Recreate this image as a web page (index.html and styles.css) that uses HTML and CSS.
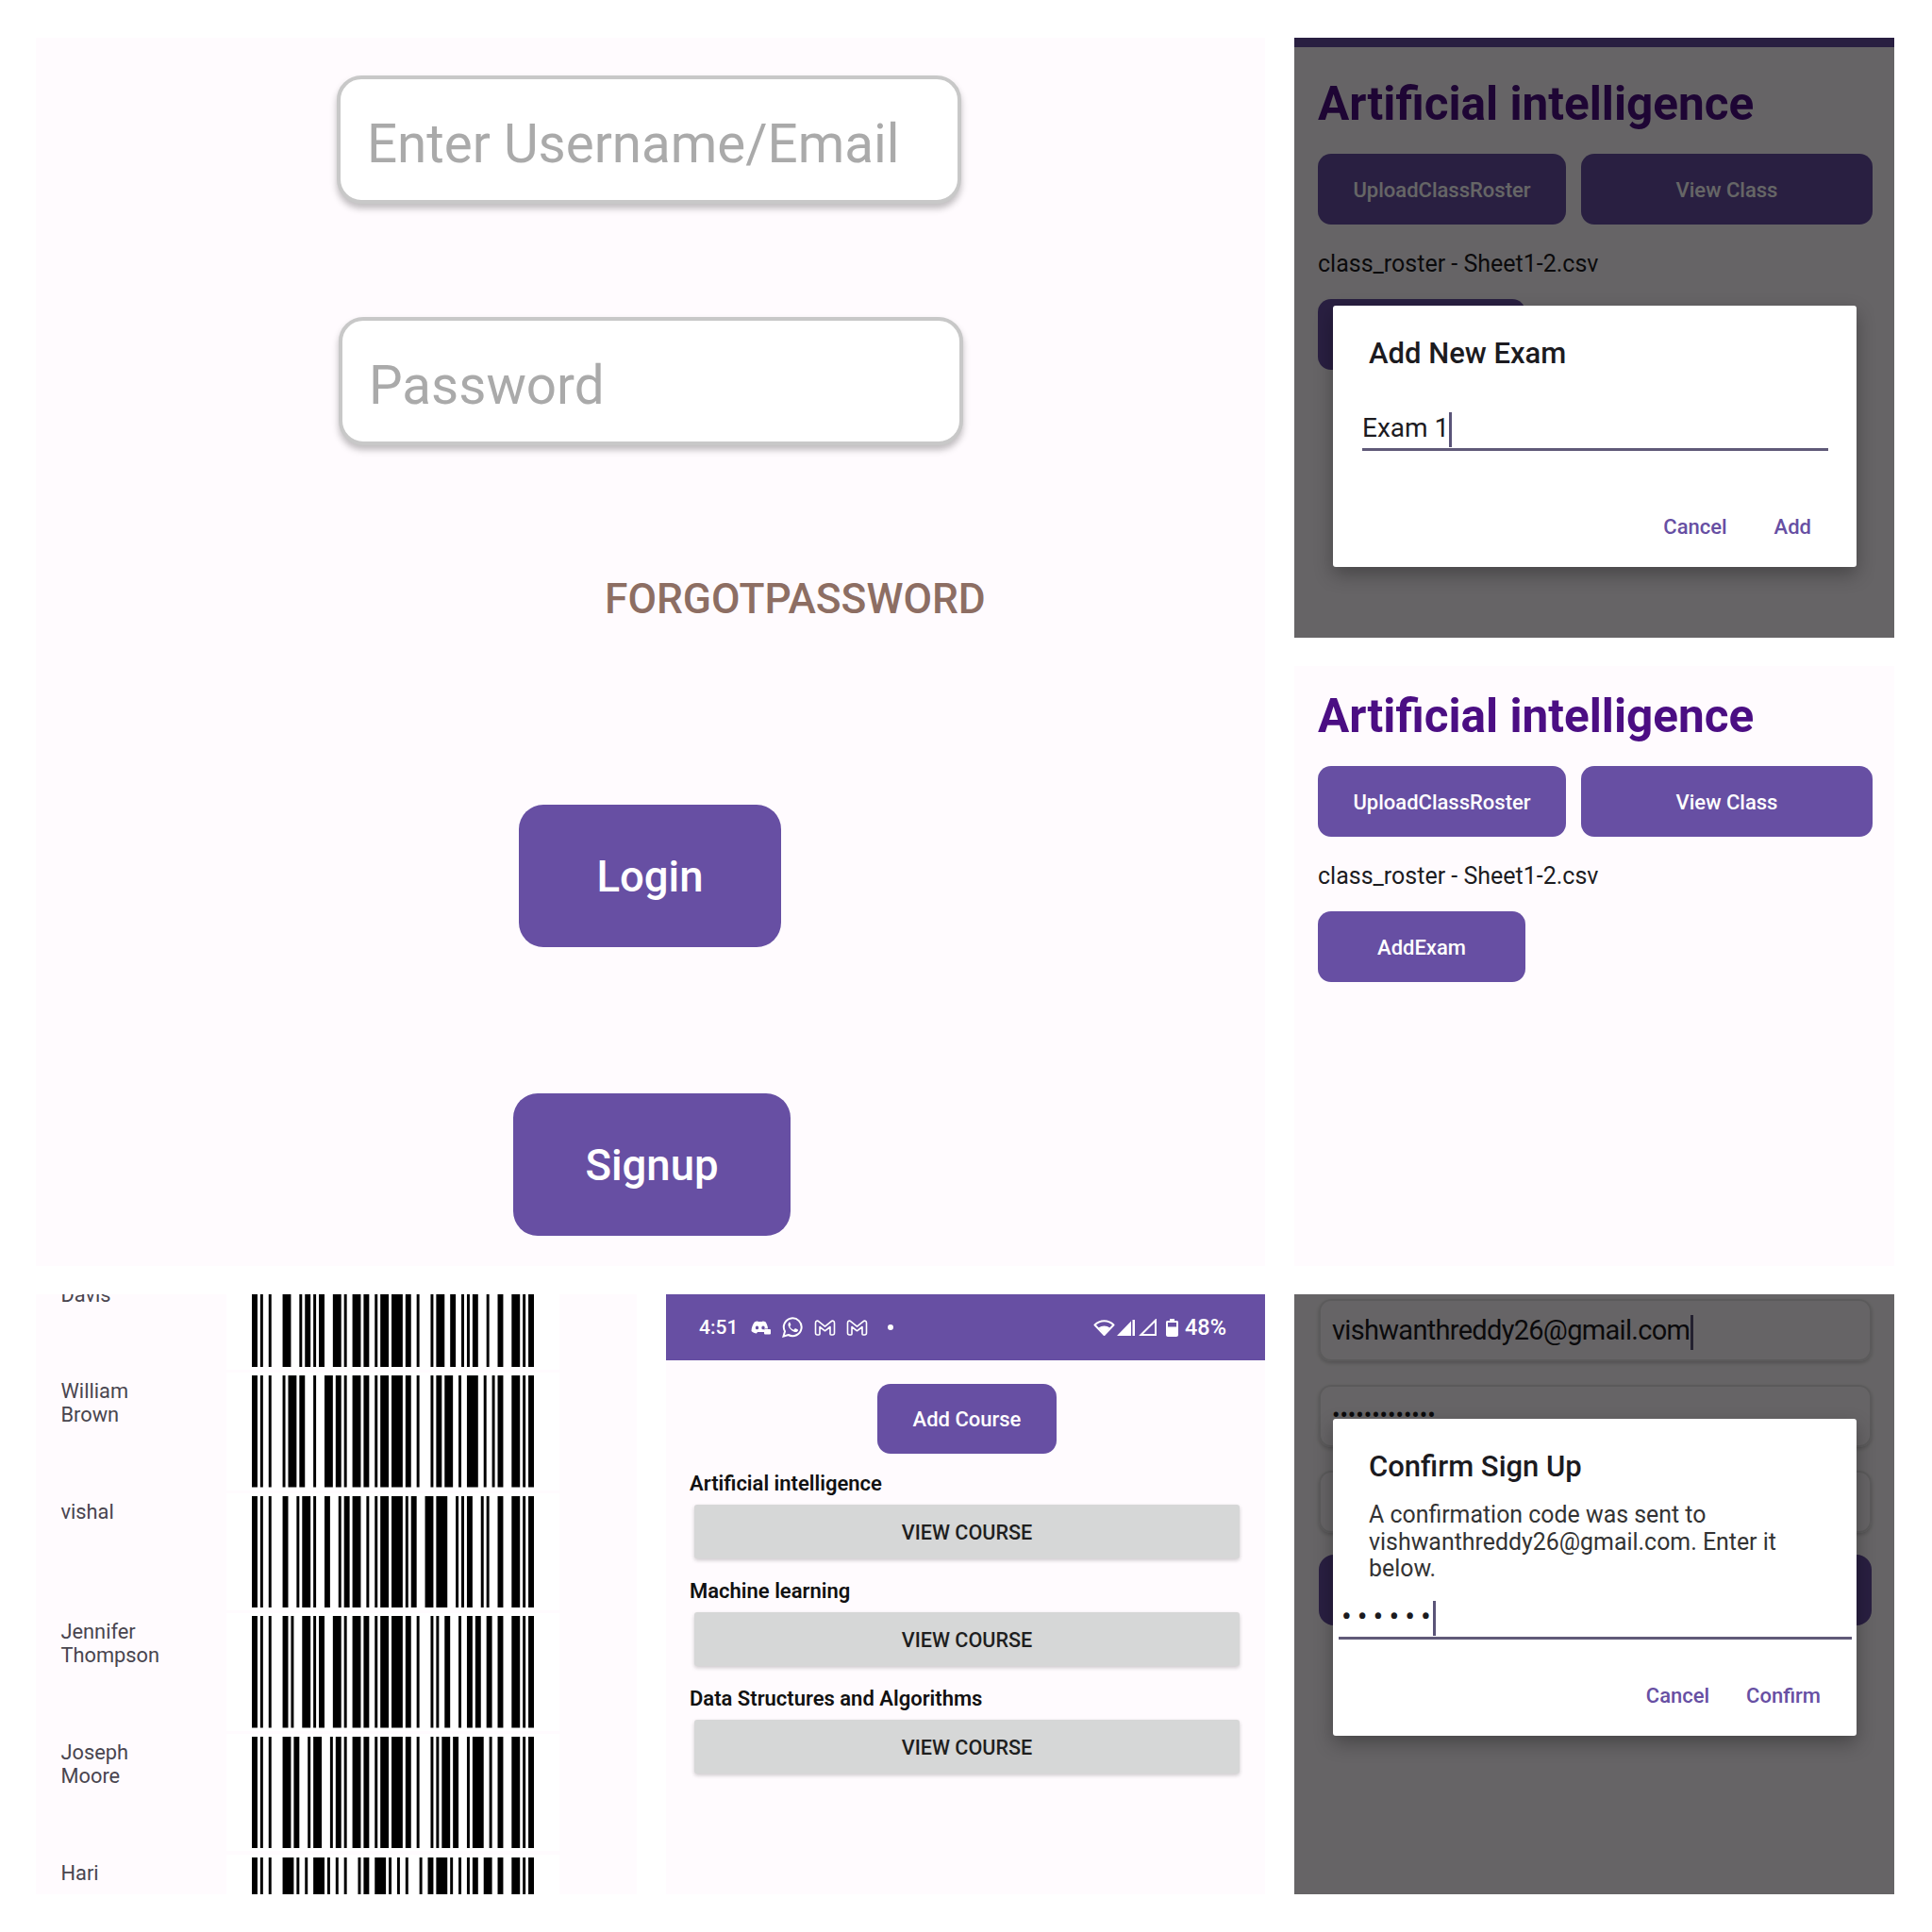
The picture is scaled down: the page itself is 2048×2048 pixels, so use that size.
FILE: index.html
```html
<!DOCTYPE html>
<html lang="en">

<head>
    <meta charset="UTF-8">
    <meta name="viewport" content="width=device-width, initial-scale=1.0">
    <title>Attendance App Screens</title>
    <link rel="stylesheet" href="styles.css">
</head>

<body>
    <div class="sheet">

        <!-- login -->
        <section class="panel login-panel">
            <input class="login-input username-input" type="text" placeholder="Enter Username/Email">
            <input class="login-input password-input" type="password" placeholder="Password">
            <div class="forgot-link">FORGOTPASSWORD</div>
            <button class="big-button login-button">Login</button>
            <button class="big-button signup-button">Signup</button>
        </section>

        <!-- add exam dialog -->
        <section class="panel course-panel">
            <div class="top-bar"></div>
            <div class="course-page">
                <h1 class="course-title">Artificial intelligence</h1>
                <div class="button-row">
                    <button class="small-button upload-button">UploadClassRoster</button>
                    <button class="small-button view-class-button">View Class</button>
                </div>
                <p class="file-name">class_roster - Sheet1-2.csv</p>
                <button class="small-button add-exam-button"></button>
            </div>
            <div class="scrim"></div>
            <div class="dialog exam-dialog">
                <h2 class="dialog-title">Add New Exam</h2>
                <div class="dialog-field exam-field"><span class="typed">Exam 1</span></div>
                <div class="dialog-actions exam-actions">
                    <span>Cancel</span>
                    <span>Add</span>
                </div>
            </div>
        </section>

        <!-- course page -->
        <section class="panel course-panel">
            <div class="course-page">
                <h1 class="course-title">Artificial intelligence</h1>
                <div class="button-row">
                    <button class="small-button upload-button">UploadClassRoster</button>
                    <button class="small-button view-class-button">View Class</button>
                </div>
                <p class="file-name">class_roster - Sheet1-2.csv</p>
                <button class="small-button add-exam-button">AddExam</button>
            </div>
        </section>

        <!-- class roster with barcodes -->
        <section class="panel roster-panel">
            <div class="roster-list">
                <div class="roster-row">
                    <div class="student-name">Michael Davis</div>
                    <div class="barcode-box"><svg class="barcode" data-widths="331121 112331 123122 113141 221411 322211 112313"></svg></div>
                </div>
                <div class="roster-row">
                    <div class="student-name">William Brown</div>
                    <div class="barcode-box"><svg class="barcode" data-widths="113123 133121 123122 113141 221411 213212 421211"></svg></div>
                </div>
                <div class="roster-row">
                    <div class="student-name">vishal</div>
                    <div class="barcode-box"><svg class="barcode" data-widths="231131 132311 213212 113141 112331 431111 231113"></svg></div>
                </div>
                <div class="roster-row">
                    <div class="student-name">Jennifer Thompson</div>
                    <div class="barcode-box"><svg class="barcode" data-widths="211331 112331 123122 113141 221411 122312 212222"></svg></div>
                </div>
                <div class="roster-row">
                    <div class="student-name">Joseph Moore</div>
                    <div class="barcode-box"><svg class="barcode" data-widths="312311 331121 123122 113141 221411 113123 114212"></svg></div>
                </div>
                <div class="roster-row">
                    <div class="student-name">Hari</div>
                    <div class="barcode-box"><svg class="barcode" data-widths="411212 411212 141122 411212 141221 411212 112232"></svg></div>
                </div>
            </div>
        </section>

        <!-- course list -->
        <section class="panel courses-panel">
            <div class="status-bar">
                <span class="status-time">4:51</span>
                <svg class="status-icon discord-icon" viewBox="0 0 21 15">
                    <path fill="#fff" fill-rule="evenodd" d="M4 1.2C6 .2 7.500 .2 8 1h3.500c.6-.8 2-.8 4 .2 1.500 2.300 2.500 5 2.500 7.300h-4V12H7l-1 1.500C4 13.500 2 12.500.5 11 .5 7.500 2 3.500 4 1.200zM6.500 5.500a1.700 1.900 0 1 0 0 3.800 1.700 1.900 0 0 0 0-3.800zm6.500 0a1.700 1.900 0 1 0 0 3.800 1.700 1.900 0 0 0 0-3.800z"/>
                    <rect x="14" y="9" width="7" height="5.500" rx="1" fill="#fff"/>
                </svg>
                <svg class="status-icon whatsapp-icon" viewBox="0 0 22 22">
                    <path fill="none" stroke="#fff" stroke-width="2" d="M1.500 20.500l1.500-5.200a9.400 9.400 0 1 1 3.700 3.700z"/>
                    <path fill="#fff" d="M7.800 5.800c-1.300.7-1.700 2.300-1 4 1 2.600 3.300 5 6 6 1.800.6 3.300.2 4-1.100.4-.8.2-1.100-.3-1.400l-2-1c-.5-.2-.8-.1-1.100.3l-.7.9c-.3.3-.5.3-.9.1-1.500-.7-2.600-1.800-3.300-3.200-.2-.4-.1-.6.1-.9l.6-.7c.2-.3.3-.5.100-.9l-.9-2c-.3-.6-.9-.6-1.600-.1z"/>
                </svg>
                <svg class="status-icon gmail-icon" viewBox="0 0 23 17">
                    <path fill="none" stroke="#fff" stroke-width="1.600" stroke-linejoin="round" d="M1.500 3.200C1.500 1.200 3.500.6 5 1.800l6.500 5.400 6.500-5.400c1.500-1.200 3.500-.6 3.500 1.400V14c0 1-.7 2-2 2h-1.500c-.6 0-1-.4-1-1V7.500l-5.500 4.300-5.500-4.300V15c0 .6-.4 1-1 1H3.500c-1.300 0-2-1-2-2z"/>
                </svg>
                <svg class="status-icon gmail-icon gmail-second" viewBox="0 0 23 17">
                    <path fill="none" stroke="#fff" stroke-width="1.600" stroke-linejoin="round" d="M1.500 3.200C1.500 1.200 3.500.6 5 1.800l6.500 5.400 6.500-5.400c1.500-1.200 3.500-.6 3.500 1.400V14c0 1-.7 2-2 2h-1.500c-.6 0-1-.4-1-1V7.500l-5.500 4.300-5.500-4.300V15c0 .6-.4 1-1 1H3.500c-1.300 0-2-1-2-2z"/>
                </svg>
                <span class="status-dot"></span>
                <svg class="status-icon wifi-icon" viewBox="0 0 23 18">
                    <path fill="none" stroke="#fff" stroke-width="2" stroke-linejoin="round" d="M1.500 6.500C7 .7 16 .7 21.500 6.500L11.500 17z"/>
                    <path fill="#fff" d="M5.500 9.500c3.500-2.700 8.500-2.700 12 0l-6 7z"/>
                </svg>
                <svg class="status-icon signal-icon" viewBox="0 0 19 18">
                    <path fill="#fff" d="M0 18L15 2.500V18zM16.500 1H19v17h-2.500z"/>
                </svg>
                <svg class="status-icon signal-icon signal-empty" viewBox="0 0 19 18">
                    <path fill="none" stroke="#fff" stroke-width="2" d="M2.500 17L18 1.500V17z"/>
                </svg>
                <svg class="status-icon battery-icon" viewBox="0 0 13 19">
                    <path fill="#fff" d="M4 0h5v2h2.500c.8 0 1.500.7 1.500 1.500V17c0 1.100-.9 2-2 2H2c-1.100 0-2-.9-2-2V3.500C0 2.700.7 2 1.500 2H4z"/>
                    <rect x="2" y="4" width="9" height="4.500" fill="#674fa3"/>
                </svg>
                <span class="status-percent">48%</span>
            </div>
            <button class="small-button add-course-button">Add Course</button>
            <div class="course-list">
                <div class="course-item">
                    <div class="course-name">Artificial intelligence</div>
                    <button class="view-course-button">VIEW COURSE</button>
                </div>
                <div class="course-item">
                    <div class="course-name">Machine learning</div>
                    <button class="view-course-button">VIEW COURSE</button>
                </div>
                <div class="course-item">
                    <div class="course-name">Data Structures and Algorithms</div>
                    <button class="view-course-button">VIEW COURSE</button>
                </div>
            </div>
        </section>

        <!-- confirm sign up dialog -->
        <section class="panel signup-panel">
            <div class="signup-form">
                <div class="signup-input email-input"><span class="typed">vishwanthreddy26@gmail.com</span></div>
                <div class="signup-input password-dots">•••••••••••••</div>
                <div class="signup-input"></div>
                <div class="signup-submit"></div>
            </div>
            <div class="scrim"></div>
            <div class="dialog confirm-dialog">
                <h2 class="dialog-title">Confirm Sign Up</h2>
                <p class="dialog-message">A confirmation code was sent to vishwanthreddy26@gmail.com. Enter it below.</p>
                <div class="dialog-field code-field"><span class="typed code-dots">••••••</span></div>
                <div class="dialog-actions confirm-actions">
                    <span>Cancel</span>
                    <span>Confirm</span>
                </div>
            </div>
        </section>

    </div>

    <script src="barcode.js"></script>
</body>

</html>
```

FILE: styles.css
```css
* {
    box-sizing: border-box;
}

body {
    margin: 0;
    background-color: #fff;
    font-family: Roboto, Arial, sans-serif;
}

button {
    border: none;
    padding: 0;
    font-family: inherit;
    cursor: pointer;
}

h1,
h2,
p {
    margin: 0;
    font-weight: normal;
}

.sheet {
    display: grid;
    grid-template-columns: 637px 635px 636px;
    grid-template-rows: repeat(3, 636px);
    column-gap: 31px;
    row-gap: 30px;
    padding: 40px 0 0 38px;
}

.panel {
    position: relative;
    overflow: hidden;
    background-color: #fffbfe;
}

/* login */
.login-panel {
    grid-column: 1 / 3;
    grid-row: 1 / 3;
    display: flex;
    flex-direction: column;
    align-items: flex-start;
    padding-top: 40px;
}

.login-input {
    width: 662px;
    height: 136px;
    padding: 9px 28px 0;
    background-color: #fff;
    border: 4px solid #c8c8c8;
    border-radius: 26px;
    box-shadow: 0 5px 7px rgba(0, 0, 0, 0.25);
    font-family: inherit;
    font-size: 56.500px;
    outline: none;
}

.login-input::placeholder {
    color: #aaa;
    opacity: 1;
}

.username-input {
    margin-left: 319px;
}

.password-input {
    margin: 120px 0 0 321px;
}

.forgot-link {
    margin: 136px 0 0 603px;
    color: #8d6e63;
    font-size: 44.300px;
    font-weight: 500;
    line-height: 54px;
}

.big-button {
    height: 151px;
    padding-top: 2px;
    background-color: #674fa3;
    border-radius: 26px;
    color: #fff;
    font-size: 45.500px;
    font-weight: 500;
}

.login-button {
    width: 278px;
    margin: 191px 0 0 512px;
}

.signup-button {
    width: 294px;
    margin: 155px 0 0 506px;
}

/* course page */
.course-panel {
    grid-column: 3;
}

.top-bar {
    height: 10px;
    margin-bottom: 7px;
    background-color: #674fa3;
}

.course-page {
    padding: 23px 23px 0 25px;
}

.course-title {
    color: #4b0e83;
    font-size: 49.500px;
    font-weight: 700;
    line-height: 60px;
}

.button-row {
    display: flex;
    gap: 16px;
    margin-top: 23px;
}

.small-button {
    height: 75px;
    padding-top: 2px;
    background-color: #674fa3;
    border-radius: 14px;
    color: #fff;
    font-size: 22px;
    font-weight: 500;
}

.upload-button {
    width: 263px;
}

.view-class-button {
    width: 309px;
}

.file-name {
    margin-top: 26px;
    color: #1c1b1f;
    font-size: 25px;
    line-height: 32px;
}

.add-exam-button {
    display: block;
    width: 220px;
    margin-top: 21px;
}

/* dialogs */
.scrim {
    position: absolute;
    inset: 0;
    background-color: rgba(0, 0, 0, 0.6);
}

.dialog {
    position: absolute;
    left: 41px;
    right: 40px;
    padding-top: 33px;
    background-color: #fff;
    border-radius: 3px;
    box-shadow: 0 8px 20px rgba(0, 0, 0, 0.3);
}

.exam-dialog {
    top: 284px;
    height: 277px;
}

.confirm-dialog {
    top: 132px;
    height: 336px;
}

.dialog-title {
    padding-left: 38px;
    color: #1c1b1f;
    font-size: 31px;
    font-weight: 500;
    line-height: 36px;
}

.dialog-message {
    margin-top: 19px;
    padding: 0 38px;
    color: #333;
    font-size: 24.900px;
    line-height: 28.700px;
}

.dialog-field {
    border-bottom: 3px solid #605a78;
    color: #1c1b1f;
}

.exam-field {
    margin: 38px 30px 0 31px;
    height: 47px;
    padding-top: 5px;
    font-size: 28px;
    line-height: 36px;
}

.code-field {
    margin: 17px 5px 0 6px;
    height: 43px;
    padding-left: 3px;
    font-size: 32px;
    line-height: 36px;
}

.code-dots {
    letter-spacing: 6px;
}

.dialog-actions {
    display: flex;
    justify-content: flex-end;
    color: #674fa3;
    font-size: 22px;
    font-weight: 500;
    line-height: 30px;
}

.exam-actions {
    gap: 50px;
    margin-top: 66px;
    padding-right: 48px;
}

.confirm-actions {
    gap: 39px;
    margin-top: 45px;
    padding-right: 38px;
}

/* text caret drawn after typed text */
.typed::after {
    content: "";
    display: inline-block;
    width: 3px;
    height: 37px;
    margin-left: 1px;
    vertical-align: middle;
    background-color: #5a5478;
}

.exam-field .typed::after {
    margin-left: 0;
}

.code-field .typed::after {
    margin-left: -4px;
}

/* roster */
.roster-panel {
    grid-column: 1;
}

.roster-list {
    display: flex;
    flex-direction: column;
    gap: 3.200px;
    margin-top: -44.400px;
}

.roster-row {
    display: flex;
    height: 124.400px;
}

.student-name {
    width: 175.500px;
    margin-left: 26.500px;
    padding: 7px 60px 0 0;
    color: #49454f;
    font-size: 21.800px;
    line-height: 25px;
}

.barcode-box {
    padding: 3px 27px;
    background-color: #fff;
}

.barcode {
    display: block;
    width: 299px;
    height: 118.400px;
}

/* course list */
.courses-panel {
    grid-column: 2;
}

.status-bar {
    display: flex;
    align-items: center;
    height: 70px;
    padding-left: 35px;
    background-color: #674fa3;
    color: #fff;
    font-size: 21px;
    font-weight: 500;
}

.status-icon {
    flex: none;
    display: block;
}

.status-time {
    width: 55px;
}

.discord-icon {
    width: 21px;
    height: 15px;
}

.whatsapp-icon {
    width: 22px;
    height: 22px;
    margin-left: 12px;
}

.gmail-icon {
    width: 23px;
    height: 17px;
    margin-left: 12px;
}

.gmail-second {
    margin-left: 11px;
}

.status-dot {
    flex: none;
    width: 6px;
    height: 6px;
    margin-left: 21px;
    border-radius: 50%;
    background-color: #fff;
}

.wifi-icon {
    width: 23px;
    height: 18px;
    margin-left: 212px;
}

.signal-icon {
    width: 19px;
    height: 18px;
    margin-left: 2px;
}

.signal-empty {
    margin-left: 4px;
}

.battery-icon {
    width: 13px;
    height: 19px;
    margin-left: 10px;
}

.status-percent {
    margin-left: 7px;
    font-size: 23.500px;
}

.add-course-button {
    display: block;
    width: 190px;
    height: 74px;
    margin: 25px 0 18px 224px;
    padding-top: 0;
}

.course-list {
    display: flex;
    flex-direction: column;
    gap: 21px;
}

.course-name {
    padding-left: 25px;
    color: #111;
    font-size: 22px;
    font-weight: 600;
    line-height: 28px;
}

.view-course-button {
    display: block;
    width: 578px;
    height: 57px;
    margin: 8px 0 0 30px;
    padding-top: 2px;
    background-color: #d6d7d7;
    border-radius: 3px;
    box-shadow: 0 2px 4px rgba(0, 0, 0, 0.2);
    color: #1f1f1f;
    font-size: 21.600px;
    font-weight: 500;
}

/* signup form behind the dialog */
.signup-panel {
    grid-column: 3;
}

.signup-form {
    display: flex;
    flex-direction: column;
    gap: 25px;
    padding: 5px 24px 0 26px;
}

.signup-input {
    height: 66px;
    padding-left: 12px;
    border: 2px solid #e4e2e4;
    border-radius: 13px;
    box-shadow: 0 2px 4px rgba(0, 0, 0, 0.2);
    color: #1c1b1f;
    line-height: 62px;
}

.email-input {
    font-size: 29px;
    letter-spacing: -0.700px;
}

.password-dots {
    font-size: 25px;
}

.signup-submit {
    height: 75px;
    margin-top: -2px;
    background-color: #674fa3;
    border-radius: 16px;
}
```

FILE: barcode.js
```js
// code 128 bars: start and stop never change, the rest comes from data-widths
const START_WIDTHS = "211214";
const STOP_WIDTHS = "2331112";
const MODULES = 101;

document.querySelectorAll(".barcode").forEach((svg) => {
    const widths = START_WIDTHS + svg.dataset.widths.replace(/ /g, "") + STOP_WIDTHS;
    svg.setAttribute("viewBox", `0 0 ${MODULES} 1`);
    svg.setAttribute("preserveAspectRatio", "none");

    let d = "";
    let x = 0;
    [...widths].forEach((w, i) => {
        // even positions are bars, odd ones are spaces
        if (i % 2 === 0) {
            d += `M${x} 0h${w}v1h-${w}z`;
        }
        x += Number(w);
    });

    const path = document.createElementNS("http://www.w3.org/2000/svg", "path");
    path.setAttribute("d", d);
    svg.appendChild(path);
});
```
